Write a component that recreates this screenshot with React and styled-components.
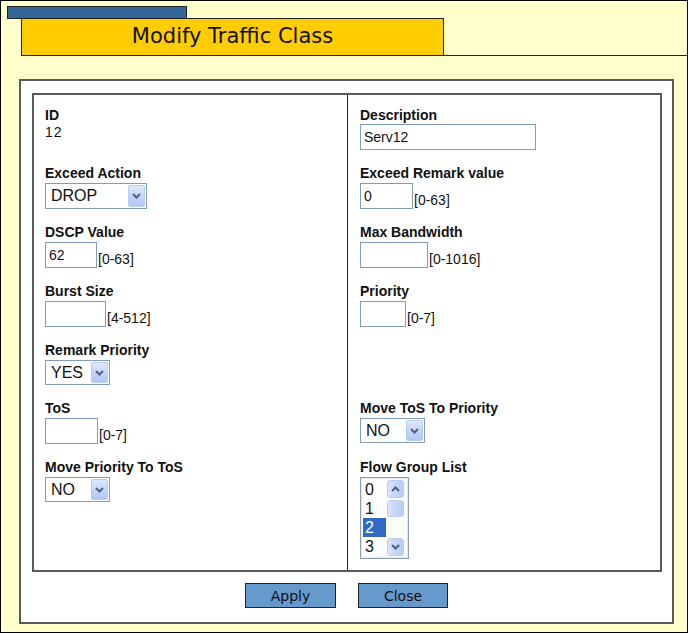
import React from "react";
import styled, { createGlobalStyle } from "styled-components";

const Global = createGlobalStyle`
  html, body { margin: 0; padding: 0; background: #ffffcc; }
  * { box-sizing: border-box; }
`;

const Frame = styled.div`
  width: 688px;
  height: 633px;
  border: 1px solid #000;
  background: #ffffcc;
  font-family: "Liberation Sans", Arial, sans-serif;
  color: #111;
  overflow: hidden;
`;

const Tab = styled.div`
  margin: 5px 0 0 6px;
  width: 180px;
  height: 13px;
  background: #336699;
  border: 1px solid #222;
`;

const TitleRow = styled.div`
  display: flex;
  margin: -1px 0 0 20px;
`;

const Title = styled.div`
  width: 423px;
  height: 38px;
  background: #ffcc00;
  border: 1px solid #222;
  font-family: "DejaVu Sans", Verdana, sans-serif;
  font-size: 21px;
  line-height: 35px;
  text-align: center;
  color: #111;
`;

const TitleRule = styled.div`
  flex: 1;
  border-bottom: 1px solid #222;
`;

const Panel = styled.div`
  margin: 23px 0 0 18px;
  width: 655px;
  height: 545px;
  background: #fff;
  border: 2px solid #5a5a5a;
  padding: 12px 0 0 11px;
`;

const Table = styled.div`
  width: 630px;
  height: 479px;
  border: 2px solid #5a5a5a;
  display: grid;
  grid-template-columns: 314px 1fr;
  grid-template-rows: repeat(6, auto) 1fr;
`;

const Cell = styled.div`
  padding: 12px 12px 3px ${(p) => (p.$left ? "11px" : "12px")};
  border-right: ${(p) => (p.$left ? "1px solid #222" : "none")};
`;

const Label = styled.div`
  font-weight: bold;
  font-size: 14px;
  line-height: 16px;
  color: #111;
`;

const Value = styled.div`
  font-size: 14px;
  line-height: 16px;
  margin-top: 1px;
  letter-spacing: 1px;
`;

const Field = styled.div`
  display: flex;
  align-items: flex-end;
  margin-top: ${(p) => (p.$tight ? 1 : 2)}px;
`;

const TextInput = styled.input`
  width: ${(p) => p.$w}px;
  height: 26px;
  border: 1px solid #7f9db9;
  padding: 0 3px;
  font-family: "Liberation Sans", Arial, sans-serif;
  font-size: 14px;
  color: #111;
  background: #fff;
  outline: none;
`;

const Hint = styled.span`
  font-size: 14px;
  line-height: 17px;
  margin-left: 1px;
  color: #111;
`;

const SelectBox = styled.div`
  position: relative;
  width: ${(p) => p.$w}px;
  height: ${(p) => p.$h}px;
  border: 1px solid #7f9db9;
  background: #fff;
  font-size: 16px;
  line-height: ${(p) => p.$h - 2}px;
  padding-left: 5px;
  color: #111;
`;

const DropButton = styled.div`
  position: absolute;
  top: 1px;
  right: 1px;
  bottom: 1px;
  width: 17px;
  border-radius: 2px;
  border: 1px solid #b9cbf3;
  background: linear-gradient(180deg, #dfe8fd 0%, #c3d4fa 55%, #b3c7f4 100%);
  display: flex;
  align-items: center;
  justify-content: center;
`;

const Chevron = ({ up }) => (
  <svg width="9" height="6" viewBox="0 0 9 6">
    <path
      d={up ? "M1 5 L4.5 1.5 L8 5" : "M1 1 L4.5 4.5 L8 1"}
      fill="none"
      stroke="#4d6185"
      strokeWidth="2"
    />
  </svg>
);

const Select = ({ value, w, h = 25 }) => (
  <SelectBox $w={w} $h={h}>
    {value}
    <DropButton>
      <Chevron />
    </DropButton>
  </SelectBox>
);

const ListBox = styled.div`
  margin-top: 2px;
  width: 49px;
  height: 82px;
  border: 1px solid #8c9db5;
  box-shadow: inset 0 0 0 1px #e4e8ee;
  padding: 2px;
  display: flex;
  background: #fff;
`;

const Items = styled.div`
  width: 23px;
`;

const Item = styled.div`
  height: 19px;
  font-size: 16px;
  line-height: 19px;
  padding-left: 2px;
  background: ${(p) => (p.$sel ? "#316ac5" : "transparent")};
  color: ${(p) => (p.$sel ? "#fff" : "#111")};
`;

const ScrollBar = styled.div`
  width: 18px;
  display: flex;
  flex-direction: column;
  background: #fcfcf4;
  padding-left: 1px;
`;

const ScrollBtn = styled.div`
  height: ${(p) => p.$h}px;
  margin-bottom: ${(p) => p.$mb || 0}px;
  border-radius: 3px;
  border: 1px solid #bccbf0;
  background: linear-gradient(90deg, #dbe5fc 0%, #c6d6fa 50%, #b7cbf5 100%);
  display: flex;
  align-items: center;
  justify-content: center;
`;

const Spacer = styled.div`
  flex: 1;
`;

const Buttons = styled.div`
  display: flex;
  justify-content: center;
  gap: 22px;
  margin-top: 11px;
  padding-right: 11px;
`;

const Button = styled.button`
  width: ${(p) => p.$w}px;
  height: 25px;
  background: #6699cc;
  border: 1px solid #222;
  font-family: "DejaVu Sans", Verdana, sans-serif;
  font-size: 14px;
  color: #111;
  padding: 0;
  cursor: pointer;
`;

export default function App() {
  return (
    <>
      <Global />
      <Frame>
        <Tab />
        <TitleRow>
          <Title>Modify Traffic Class</Title>
          <TitleRule />
        </TitleRow>
        <Panel>
          <Table>
            <Cell $left>
              <Label>ID</Label>
              <Value>12</Value>
            </Cell>
            <Cell>
              <Label>Description</Label>
              <Field $tight>
                <TextInput $w={176} defaultValue="Serv12" />
              </Field>
            </Cell>

            <Cell $left>
              <Label>Exceed Action</Label>
              <Field>
                <Select value="DROP" w={102} h={26} />
              </Field>
            </Cell>
            <Cell>
              <Label>Exceed Remark value</Label>
              <Field>
                <TextInput $w={53} defaultValue="0" />
                <Hint>[0-63]</Hint>
              </Field>
            </Cell>

            <Cell $left>
              <Label>DSCP Value</Label>
              <Field>
                <TextInput $w={52} defaultValue="62" />
                <Hint>[0-63]</Hint>
              </Field>
            </Cell>
            <Cell>
              <Label>Max Bandwidth</Label>
              <Field>
                <TextInput $w={68} defaultValue="" />
                <Hint>[0-1016]</Hint>
              </Field>
            </Cell>

            <Cell $left>
              <Label>Burst Size</Label>
              <Field>
                <TextInput $w={61} defaultValue="" />
                <Hint>[4-512]</Hint>
              </Field>
            </Cell>
            <Cell>
              <Label>Priority</Label>
              <Field>
                <TextInput $w={46} defaultValue="" />
                <Hint>[0-7]</Hint>
              </Field>
            </Cell>

            <Cell $left>
              <Label>Remark Priority</Label>
              <Field>
                <Select value="YES" w={65} h={25} />
              </Field>
            </Cell>
            <Cell />

            <Cell $left>
              <Label>ToS</Label>
              <Field>
                <TextInput $w={53} defaultValue="" />
                <Hint>[0-7]</Hint>
              </Field>
            </Cell>
            <Cell>
              <Label>Move ToS To Priority</Label>
              <Field>
                <Select value="NO" w={65} h={25} />
              </Field>
            </Cell>

            <Cell $left>
              <Label>Move Priority To ToS</Label>
              <Field>
                <Select value="NO" w={65} h={25} />
              </Field>
            </Cell>
            <Cell>
              <Label>Flow Group List</Label>
              <ListBox>
                <Items>
                  <Item>0</Item>
                  <Item>1</Item>
                  <Item $sel>2</Item>
                  <Item>3</Item>
                </Items>
                <ScrollBar>
                  <ScrollBtn $h={18} $mb={2}>
                    <Chevron up />
                  </ScrollBtn>
                  <ScrollBtn $h={17} />
                  <Spacer />
                  <ScrollBtn $h={18}>
                    <Chevron />
                  </ScrollBtn>
                </ScrollBar>
              </ListBox>
            </Cell>
          </Table>
          <Buttons>
            <Button $w={91}>Apply</Button>
            <Button $w={90}>Close</Button>
          </Buttons>
        </Panel>
      </Frame>
    </>
  );
}
